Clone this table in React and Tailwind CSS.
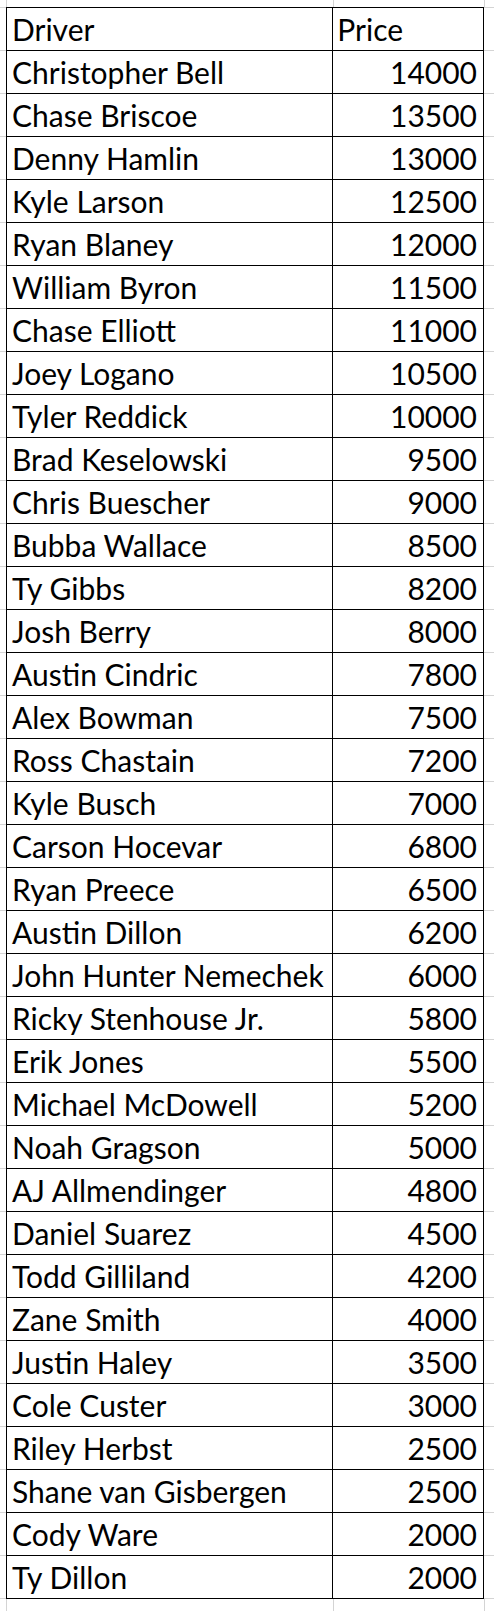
import React from "react";

const rows = [
  ["Christopher Bell", "14000"],
  ["Chase Briscoe", "13500"],
  ["Denny Hamlin", "13000"],
  ["Kyle Larson", "12500"],
  ["Ryan Blaney", "12000"],
  ["William Byron", "11500"],
  ["Chase Elliott", "11000"],
  ["Joey Logano", "10500"],
  ["Tyler Reddick", "10000"],
  ["Brad Keselowski", "9500"],
  ["Chris Buescher", "9000"],
  ["Bubba Wallace", "8500"],
  ["Ty Gibbs", "8200"],
  ["Josh Berry", "8000"],
  ["Austin Cindric", "7800"],
  ["Alex Bowman", "7500"],
  ["Ross Chastain", "7200"],
  ["Kyle Busch", "7000"],
  ["Carson Hocevar", "6800"],
  ["Ryan Preece", "6500"],
  ["Austin Dillon", "6200"],
  ["John Hunter Nemechek", "6000"],
  ["Ricky Stenhouse Jr.", "5800"],
  ["Erik Jones", "5500"],
  ["Michael McDowell", "5200"],
  ["Noah Gragson", "5000"],
  ["AJ Allmendinger", "4800"],
  ["Daniel Suarez", "4500"],
  ["Todd Gilliland", "4200"],
  ["Zane Smith", "4000"],
  ["Justin Haley", "3500"],
  ["Cole Custer", "3000"],
  ["Riley Herbst", "2500"],
  ["Shane van Gisbergen", "2500"],
  ["Cody Ware", "2000"],
  ["Ty Dillon", "2000"],
];

function Strip({ h }) {
  return (
    <div className={`flex ${h}`}>
      <div className="w-[6px]" />
      <div className="w-px bg-[#d4d4d4]" />
      <div className="w-[326px]" />
      <div className="w-px bg-[#d4d4d4]" />
      <div className="w-[150px]" />
      <div className="w-px bg-[#d4d4d4]" />
      <div className="flex-1" />
    </div>
  );
}

function Row({ a, b, right = true }) {
  return (
    <div className="flex h-[43px]">
      <div className="w-[6px] border-b border-[#d4d4d4]" />
      <div className="flex w-[478px] border-x border-b border-black">
        <div className="flex w-[326px] items-end whitespace-nowrap pl-[5px] pb-[6px] leading-none">{a}</div>
        <div className="flex w-[151px] items-end border-l border-black pl-[4px] pr-[6px] pb-[6px] leading-none">
          <span className={right ? "w-full text-right" : "w-full text-left"}>{b}</span>
        </div>
      </div>
      <div className="flex-1 border-b border-[#d4d4d4]" />
    </div>
  );
}

export default function App() {
  return (
    <div
      className="h-[1611px] w-[494px] overflow-hidden bg-white text-[30px] text-black"
      style={{ fontFamily: "Lato, 'Open Sans', sans-serif" }}
    >
      <div className="relative h-[8px]">
        <Strip h="h-[7px]" />
        <div className="flex h-px">
          <div className="w-[6px] bg-[#d4d4d4]" />
          <div className="w-[478px] bg-black" />
          <div className="flex-1 bg-[#d4d4d4]" />
        </div>
      </div>
      <Row a="Driver" b="Price" right={false} />
      {rows.map(([a, b]) => (
        <Row key={a + b} a={a} b={b} />
      ))}
      <Strip h="h-[12px]" />
    </div>
  );
}
